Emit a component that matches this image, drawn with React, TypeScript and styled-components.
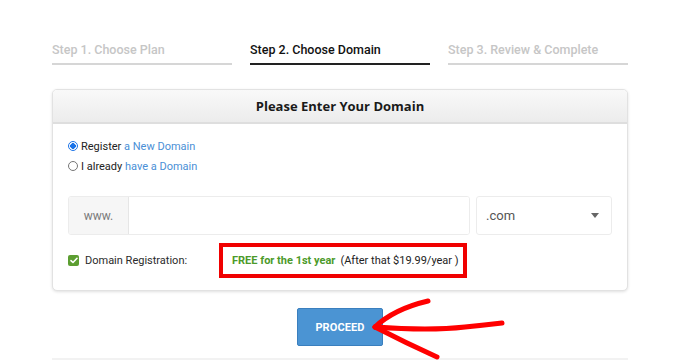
import React from "react";
import styled, { createGlobalStyle } from "styled-components";

const Global = createGlobalStyle`
  html, body { margin: 0; padding: 0; background: #ffffff; }
  body { font-family: Roboto, "Liberation Sans", Arial, sans-serif; }
  * { box-sizing: border-box; }
`;

const Page = styled.div`
  width: 576px;
  margin: 0 auto;
  padding-top: 41px;
`;

const Steps = styled.div`
  display: grid;
  grid-template-columns: repeat(3, 1fr);
  column-gap: 18px;
`;

const Step = styled.div<{ $active?: boolean }>`
  font-size: 12.5px;
  font-weight: 500;
  line-height: 18px;
  padding-bottom: 4px;
  color: ${(p) => (p.$active ? "#111111" : "#c6c6c6")};
  border-bottom: 2px solid ${(p) => (p.$active ? "#222222" : "#d6d6d6")};
`;

const Card = styled.div`
  margin-top: 24px;
  border: 1px solid #e2e2e2;
  border-radius: 5px;
  box-shadow: 0 1px 3px rgba(0, 0, 0, 0.12);
  background: #fff;
  overflow: hidden;
`;

const CardHeader = styled.div`
  height: 34px;
  display: flex;
  align-items: center;
  justify-content: center;
  background: linear-gradient(#f9f9f9, #ececec);
  border-bottom: 2px solid #dedede;
  font-family: "Open Sans", Lato, sans-serif;
  font-weight: 700;
  font-size: 13px;
  color: #1a1a1a;
`;

const CardBody = styled.div`
  padding: 12px 15px 12px 14px;
`;

const RadioRow = styled.label`
  display: flex;
  align-items: center;
  height: 20px;
  font-size: 11px;
  color: #222;
  gap: 3px;
`;

const Radio = styled.span<{ $checked?: boolean }>`
  width: 10px;
  height: 10px;
  border-radius: 50%;
  margin-left: 1px;
  border: 1px solid ${(p) => (p.$checked ? "#1a73e8" : "#767676")};
  background: ${(p) =>
    p.$checked ? "radial-gradient(circle, #1a73e8 0 2.6px, #fff 3px)" : "#fff"};
`;

const Link = styled.span`
  color: #4a8fd6;
`;

const InputRow = styled.div`
  margin-top: 20px;
  display: flex;
  height: 39px;
  gap: 6px;
  padding-left: 1px;
`;

const Group = styled.div`
  display: flex;
  flex: 1;
  border: 1px solid #ececec;
  border-radius: 3px;
  overflow: hidden;
`;

const Prefix = styled.div`
  width: 60px;
  background: #f6f6f6;
  border-right: 1px solid #e6e6e6;
  display: flex;
  align-items: center;
  justify-content: center;
  font-size: 12px;
  color: #7a7a7a;
`;

const TextInput = styled.div`
  flex: 1;
  background: #fff;
`;

const Select = styled.div`
  width: 136px;
  border: 1px solid #ececec;
  border-radius: 3px;
  display: flex;
  align-items: center;
  justify-content: space-between;
  padding: 0 12px 0 9px;
  font-size: 13px;
  color: #555;
`;

const Caret = styled.span`
  width: 0;
  height: 0;
  border-left: 4.5px solid transparent;
  border-right: 4.5px solid transparent;
  border-top: 5px solid #666;
`;

const RegRow = styled.div`
  margin-top: 8px;
  display: grid;
  grid-template-columns: 151px auto;
  justify-content: start;
  align-items: center;
  padding-left: 1px;
`;

const CheckLabel = styled.div`
  display: flex;
  align-items: center;
  gap: 6px;
  font-size: 11px;
  color: #2a2a2a;
`;

const Check = styled.span`
  width: 11px;
  height: 11px;
  border-radius: 2px;
  background: #5c9e31;
  display: flex;
  align-items: center;
  justify-content: center;
`;

const Highlight = styled.div`
  height: 35px;
  border: 4px solid #f00000;
  display: flex;
  align-items: center;
  padding: 0 4px 0 9px;
  gap: 5px;
  font-size: 11px;
  color: #222;
`;

const Free = styled.span`
  color: #4c9a2a;
  font-weight: 700;
`;

const ActionRow = styled.div`
  position: relative;
  margin-top: 17px;
  display: flex;
  justify-content: center;
`;

const Button = styled.button`
  width: 86px;
  height: 38px;
  background: #4b94d3;
  border: 1px solid #3a7fbe;
  border-radius: 2px;
  color: #fff;
  font-family: Roboto, sans-serif;
  font-weight: 700;
  font-size: 11px;
  letter-spacing: 0.1px;
  cursor: pointer;
`;

const Arrow = styled.svg`
  position: absolute;
  left: 318px;
  top: -15px;
  overflow: visible;
`;

const Footer = styled.div`
  margin-top: 12px;
  height: 4px;
  background: #f2f2f2;
`;

export default function App() {
  return (
    <>
      <Global />
      <Page>
        <Steps>
          <Step>Step 1. Choose Plan</Step>
          <Step $active>Step 2. Choose Domain</Step>
          <Step>Step 3. Review &amp; Complete</Step>
        </Steps>
        <Card>
          <CardHeader>Please Enter Your Domain</CardHeader>
          <CardBody>
            <RadioRow>
              <Radio $checked />
              <span>
                Register <Link>a New Domain</Link>
              </span>
            </RadioRow>
            <RadioRow>
              <Radio />
              <span>
                I already <Link>have a Domain</Link>
              </span>
            </RadioRow>
            <InputRow>
              <Group>
                <Prefix>www.</Prefix>
                <TextInput />
              </Group>
              <Select>
                <span>.com</span>
                <Caret />
              </Select>
            </InputRow>
            <RegRow>
              <CheckLabel>
                <Check>
                  <svg width="8" height="7" viewBox="0 0 8 7">
                    <path d="M1 3.6 L3 5.5 L7 1.3" fill="none" stroke="#fff" strokeWidth="1.6" strokeLinecap="round" strokeLinejoin="round" />
                  </svg>
                </Check>
                Domain Registration:
              </CheckLabel>
              <Highlight>
                <Free>FREE for the 1st year</Free>
                <span>(After that $19.99/year )</span>
              </Highlight>
            </RegRow>
          </CardBody>
        </Card>
        <ActionRow>
          <Button>PROCEED</Button>
          <Arrow width="140" height="70" viewBox="0 0 140 70">
            <g fill="none" stroke="#ff0000" strokeWidth="5" strokeLinecap="round" strokeLinejoin="round">
              <path d="M5 34 Q 24 16 58 8" />
              <path d="M5 34 Q 60 38 95 34 Q 115 32 132 30" />
              <path d="M5 34 Q 36 50 67 64" />
            </g>
          </Arrow>
        </ActionRow>
        <Footer />
      </Page>
    </>
  );
}
